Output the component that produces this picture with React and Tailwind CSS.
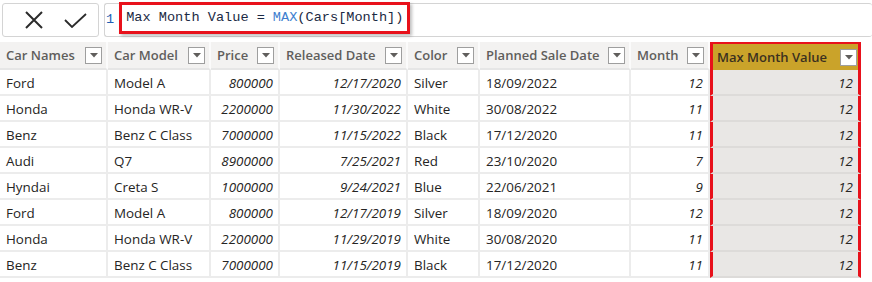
import React from "react";

const rows = [
  ["Ford", "Model A", "800000", "12/17/2020", "Silver", "18/09/2022", "12"],
  ["Honda", "Honda WR-V", "2200000", "11/30/2022", "White", "30/08/2022", "11"],
  ["Benz", "Benz C Class", "7000000", "11/15/2022", "Black", "17/12/2020", "11"],
  ["Audi", "Q7", "8900000", "7/25/2021", "Red", "23/10/2020", "7"],
  ["Hyndai", "Creta S", "1000000", "9/24/2021", "Blue", "22/06/2021", "9"],
  ["Ford", "Model A", "800000", "12/17/2019", "Silver", "18/09/2020", "12"],
  ["Honda", "Honda WR-V", "2200000", "11/29/2019", "White", "30/08/2020", "11"],
  ["Benz", "Benz C Class", "7000000", "11/15/2019", "Black", "17/12/2020", "11"],
];

const heads = ["Car Names", "Car Model", "Price", "Released Date", "Color", "Planned Sale Date", "Month"];
const rightAligned = [false, false, true, true, false, false, true];

function Drop() {
  return (
    <span className="flex h-[17px] w-[17px] shrink-0 items-center justify-center border border-[#9e9e9e] bg-white">
      <svg width="8" height="5" viewBox="0 0 8 5">
        <path d="M0 0 L8 0 L4 4.5 Z" fill="#605e5c" />
      </svg>
    </span>
  );
}

export default function App() {
  return (
    <div className="h-[282px] w-[872px] overflow-hidden bg-white font-['Open_Sans','Noto_Sans',sans-serif] text-[13.4px] text-[#252423]">
      {/* Formula bar */}
      <div className="flex h-[40px] items-start pt-[3px]">
        <div className="ml-[2px] flex h-[34px] w-[97px] items-center gap-[20px] rounded-[3px] border border-[#d4d4d4] pl-[21px]">
          <svg width="20" height="18" viewBox="0 0 20 18">
            <path d="M2 1 L18 17 M18 1 L2 17" stroke="#2b2b2b" strokeWidth="2" fill="none" />
          </svg>
          <svg width="23" height="15" viewBox="0 0 23 15">
            <path d="M1 7 L8 14 L22 1" stroke="#2b2b2b" strokeWidth="1.8" fill="none" />
          </svg>
        </div>
        <div className="ml-[5px] flex h-[34px] flex-1 items-start rounded-[3px] border border-r-0 border-[#d4d4d4] font-['Liberation_Mono',monospace] text-[13.6px]">
          <span className="ml-[1px] mt-[6px] text-[#1e5fb4]">1</span>
          <span className="-mt-[2px] ml-[5px] flex h-[32px] w-[291px] items-center border-[3px] border-[#e8111b] pl-[4px] text-[#1b2a44] shadow-[2px_2px_3px_rgba(0,0,0,0.25)]">
            Max Month Value = <span className="ml-[8px] text-[#3e7fd0]">MAX</span>(Cars[Month])
          </span>
        </div>
      </div>

      {/* Table */}
      <div className="grid grid-cols-[108px_103px_69px_128px_72px_151px_79px_151px] pt-[2px]">
        {heads.map((h) => (
          <div
            key={h}
            className="flex h-[28px] items-center justify-between border-b-2 border-r-2 border-b-[#e6e6e6] border-r-[#fbfbfb] bg-[#f3f2f1] pl-[6px] pr-[4px] text-[13px] font-semibold text-[#605e5c]"
          >
            <span className="pt-[1px]">{h}</span>
            <Drop />
          </div>
        ))}
        <div className="flex h-[28px] items-center justify-between border-x-[3px] border-t-2 border-[#e8111b] bg-[#caa32a] pl-[4px] pr-[1px] text-[13px] font-semibold text-[#3b3020]">
          <span className="pt-[1px]">Max Month Value</span>
          <Drop />
        </div>

        {rows.map((r, i) => (
          <React.Fragment key={i}>
            {r.map((c, j) => (
              <div
                key={j}
                className={
                  rightAligned[j]
                    ? "flex h-[26px] items-center justify-end border-b-2 border-r-2 border-[#ececec] pr-[5px] pt-[2px] italic"
                    : "flex h-[26px] items-center border-b-2 border-r-2 border-[#ececec] pl-[6px] pt-[2px]"
                }
              >
                {c}
              </div>
            ))}
            <div className="flex h-[26px] items-center justify-end border-x-[3px] border-b-2 border-x-[#e8111b] border-b-[#dddbd9] bg-[#e9e7e5] pr-[5px] pt-[2px] italic">
              12
            </div>
          </React.Fragment>
        ))}
      </div>
    </div>
  );
}
